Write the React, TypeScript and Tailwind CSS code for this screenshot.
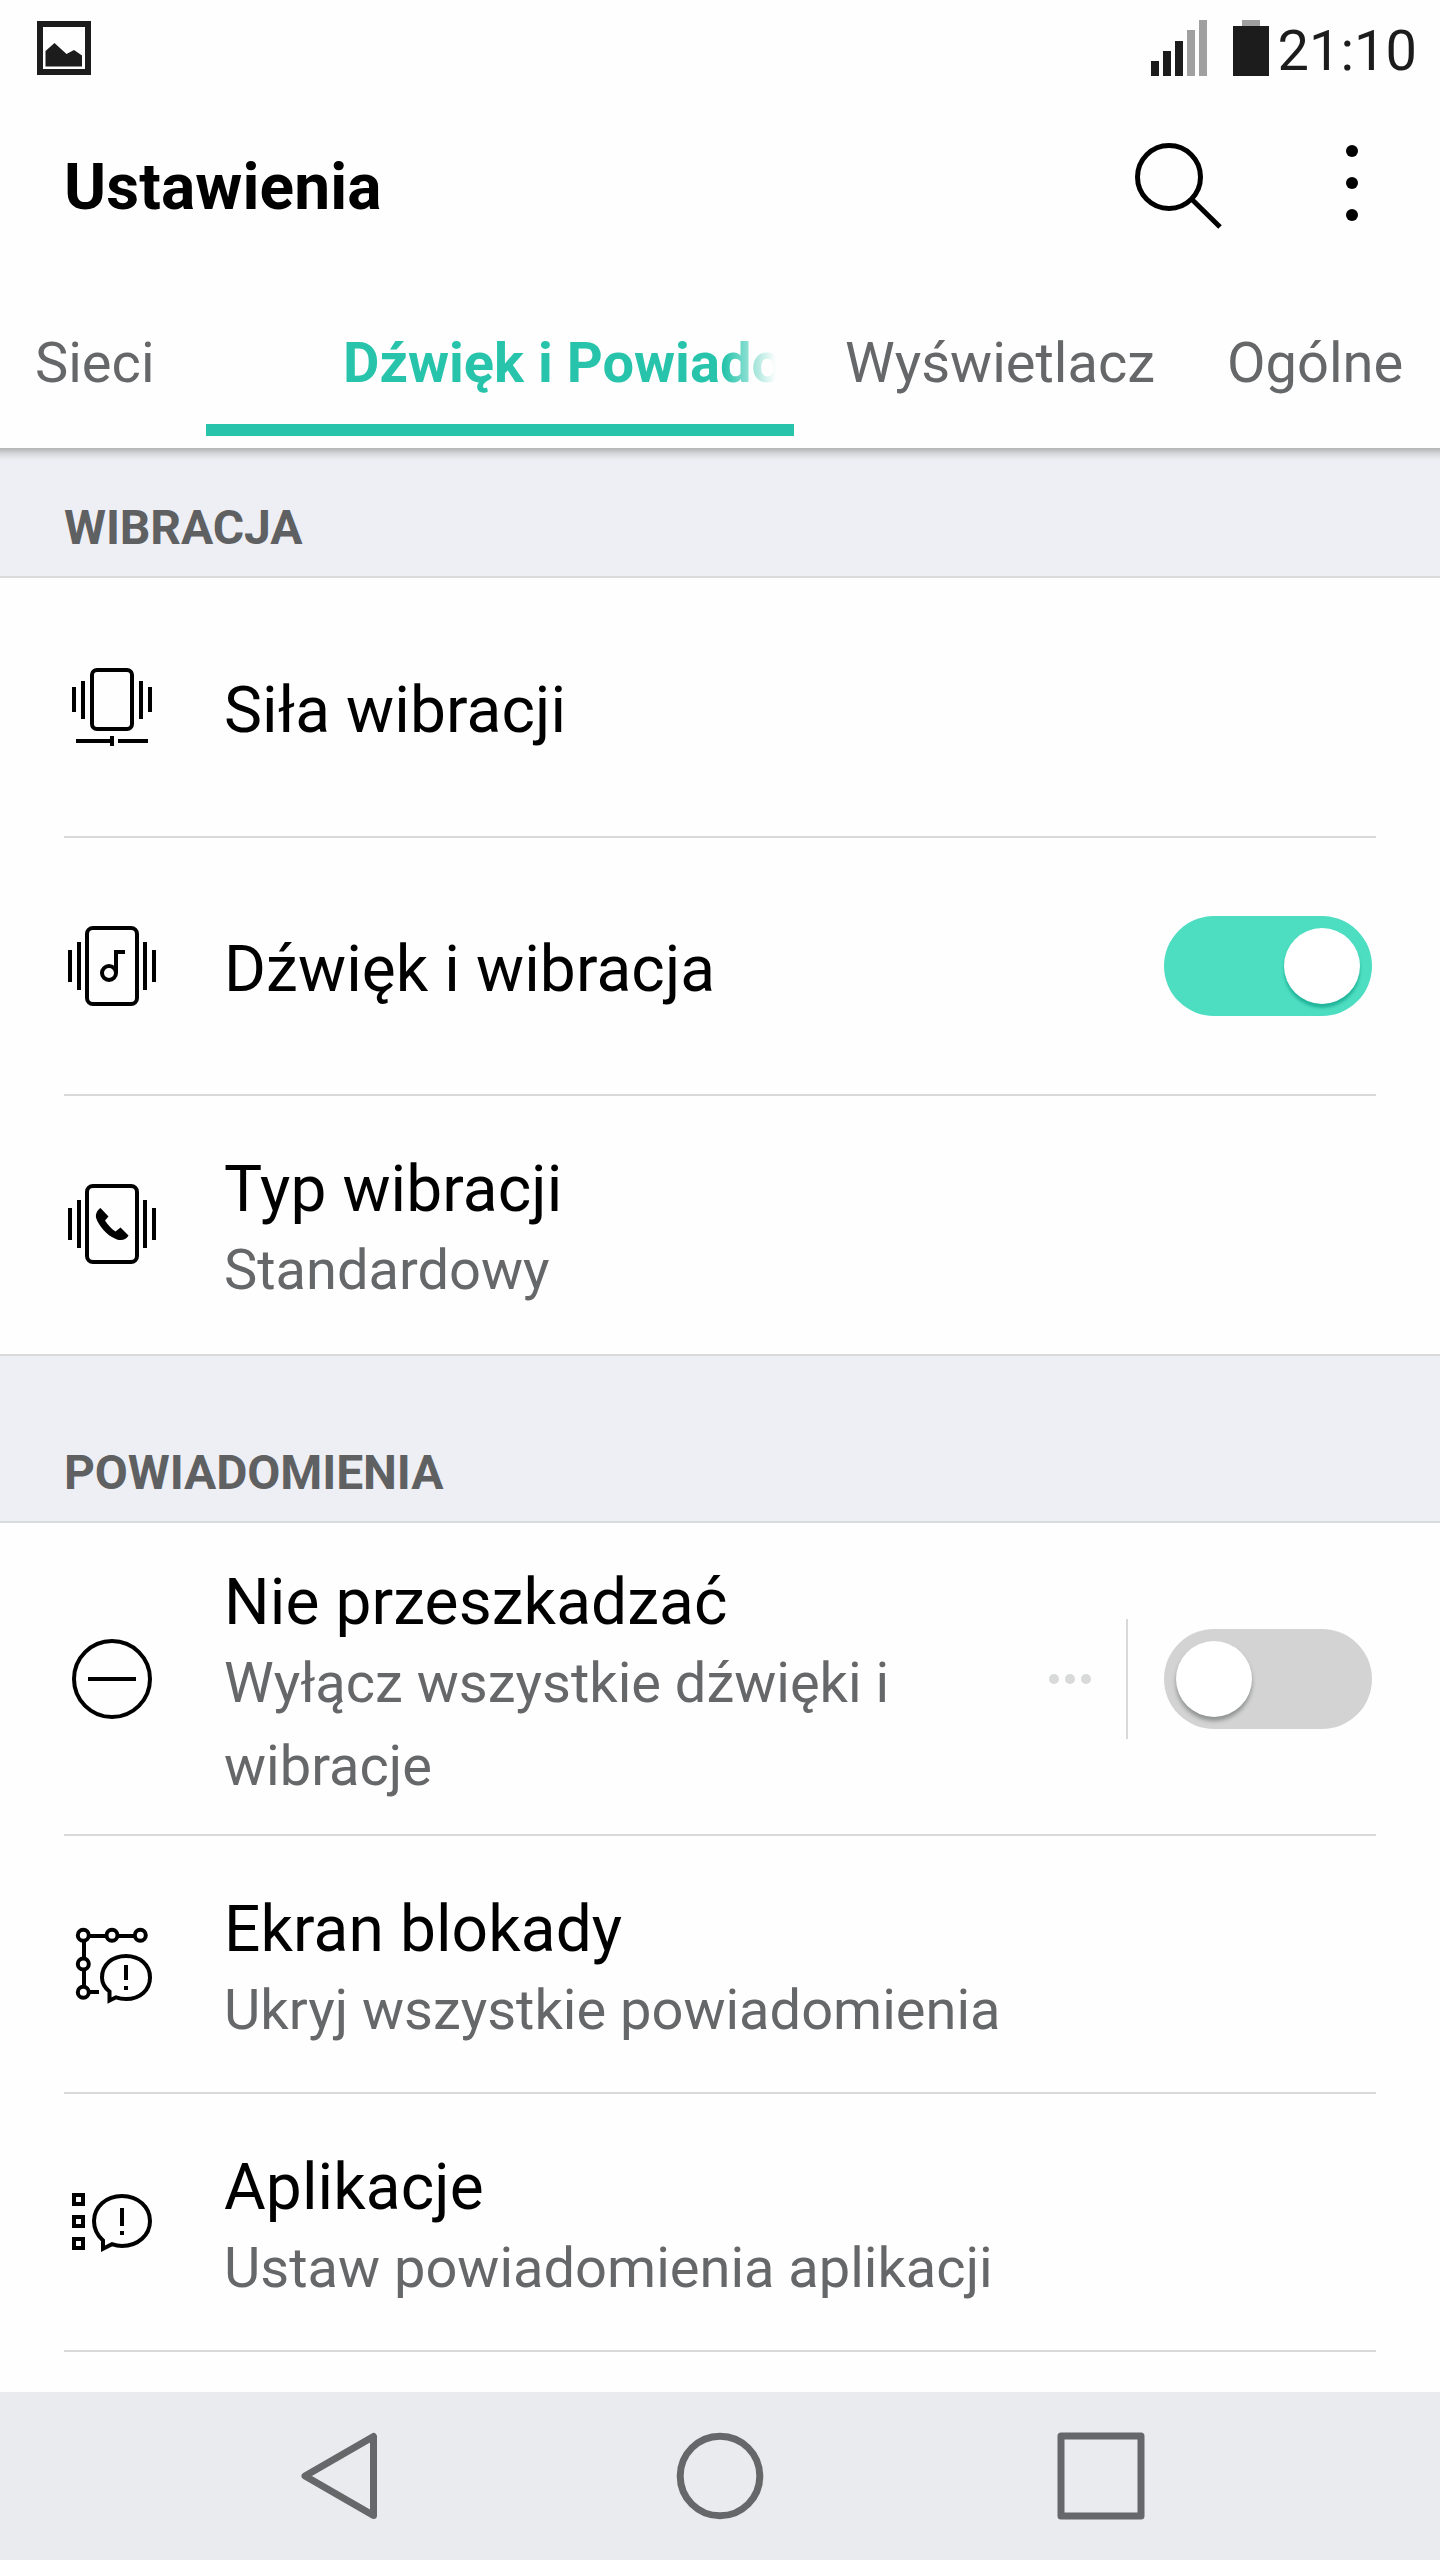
import React from 'react';
import clsx from 'clsx';

interface SettingRowProps {
    icon: React.ReactNode;
    title: string;
    summary?: string;
    className?: string;
    last?: boolean;
    children?: React.ReactNode;
}

const PictureIcon = () => (
    <svg className="w-[54px] h-[54px]" viewBox="0 0 54 54" fill="#1c1c1c">
        <path fillRule="evenodd" d="M0 0h54v54H0zM6 6v42h42V6z" />
        <path d="M8.5 30 17.500 22 29.500 33 37 29 45 34.500V45.500H8.500z" />
    </svg>
);

const SignalIcon = () => (
    <svg className="w-14 h-14" viewBox="0 0 56 56">
        <path fill="#1c1c1c" d="M0 41h8v15H0zM12 31h8v25h-8zM24 21h8v35h-8z" />
        <path fill="#a0a0a0" d="M36 10h8v46h-8zM48 0h8v56h-8z" />
    </svg>
);

const BatteryIcon = () => (
    <svg className="w-9 h-14" viewBox="0 0 36 56">
        <path fill="#a0a0a0" d="M9 0h18v6H9z" />
        <path fill="#1c1c1c" d="M0 6h36v50H0z" />
    </svg>
);

const IconBox = ({ children }: { children: React.ReactNode }) => (
    <svg className="shrink-0 w-24 h-24" viewBox="0 0 96 96" fill="none" stroke="#000" strokeWidth="4">
        {children}
    </svg>
);

const VibrationStrengthIcon = () => (
    <IconBox>
        <rect x="28" y="11" width="40" height="59" rx="5" />
        <path d="M10 28v25M19 22v38M77 22v38M86 28v25" />
        <path d="M12 82h36M54 82h30M48 77v10" />
    </IconBox>
);

// Phone outline with the vibration bars on both sides
const VibratingPhone = () => (
    <>
        <rect x="23" y="10" width="50" height="76" rx="6" />
        <path d="M6 32v32M15 24v48M81 24v48M90 32v32" />
    </>
);

const VibrationSoundIcon = () => (
    <IconBox>
        <VibratingPhone />
        <circle cx="45" cy="55" r="7" />
        <path d="M52 55V34h9" />
    </IconBox>
);

const VibrationTypeIcon = () => (
    <IconBox>
        <VibratingPhone />
        <path
            fill="#000"
            stroke="none"
            d="M36.500 32 44.500 40.500 41 44.500C44 49 47 52.500 51.500 55.500L56.500 51.500 64.500 59.500C63 63 58.500 65 53 63.500C43 60 34 49 32 41.500C31.500 37.500 33.500 34 36.500 32z"
        />
    </IconBox>
);

const DoNotDisturbIcon = () => (
    <IconBox>
        <circle cx="48" cy="48" r="38" />
        <path d="M24 48h48" />
    </IconBox>
);

const LockScreenIcon = () => (
    <IconBox>
        <circle cx="19.300" cy="19.300" r="5.500" />
        <circle cx="48" cy="19.300" r="5.500" />
        <circle cx="76.300" cy="19.300" r="5.500" />
        <circle cx="19.300" cy="48" r="5.500" />
        <circle cx="19.300" cy="76.300" r="5.500" />
        <path d="M25 20h17M54 20h17M20 25v17M20 54v17M25 76h10" />
        <path d="M45.500 75.500C41 72 38 67 38 61.500C38 49 48 40 62 40C76 40 86 49 86 61.500C86 74 76 83 62 83C58.500 83 55 82.400 52 81.300L45.500 84.500z" />
        <path d="M62 49v15M62 70v4" />
    </IconBox>
);

const AppsIcon = () => (
    <IconBox>
        <path d="M10 21h9v9h-9zM10 43h9v9h-9zM10 65h9v9h-9z" />
        <path d="M39 66.500C34 62 30 55 30 47C30 33 42 22 58 22C74 22 86 33 86 47C86 61 74 72 58 72C54.500 72 51 71.300 48 70.200L39 74.800z" />
        <path d="M58 34v18M58 57v4" />
    </IconBox>
);

const Toggle = ({ on }: { on?: boolean }) => (
    <div
        className={clsx(
            'flex items-center shrink-0 w-52 h-[100px] px-3 mr-1 rounded-full',
            on ? 'justify-end bg-[#4dddc0]' : 'bg-[#d3d3d3]'
        )}
    >
        <div
            className={clsx(
                'size-[76px] rounded-full bg-white',
                on ? 'shadow-[0_4px_3px_#22b59b]' : 'shadow-[0_4px_4px_#8f9292]'
            )}
        />
    </div>
);

const SectionHeader = ({ label, className }: { label: string; className: string }) => (
    <div className={clsx('flex items-end shrink-0 px-16 pb-5 bg-[#eeeff4] border-b-2 border-[#d9dada]', className)}>
        <h2 className="text-[48px] leading-[56px] tracking-[-0.1px] font-bold text-[#5f6062]">{label}</h2>
    </div>
);

const SettingRow: React.FC<SettingRowProps> = ({ icon, title, summary, className = 'h-[258px]', last, children }) => (
    <div className={clsx('shrink-0', last ? 'border-b-2 border-[#d9d9d9]' : 'px-16', className)}>
        <div className={clsx('flex items-center h-full', last ? 'px-16 pb-0.5' : 'border-b-2 border-[#d9d9d9]')}>
            {icon}
            <div className={clsx('flex-1 ml-16', summary ? 'pt-[15px]' : 'pt-[8px]')}>
                <div className="text-[64px] leading-[78px] tracking-[0.1px] text-black">{title}</div>
                {summary && <div className="text-[56px] leading-[83px] text-[#666769]">{summary}</div>}
            </div>
            {children}
        </div>
    </div>
);

export default function App() {
    return (
        <div className="flex flex-col w-[1440px] h-[2560px] overflow-hidden bg-[#fefefe] font-['Roboto',sans-serif]">
            {/* Status bar */}
            <div className="flex items-start shrink-0 h-24 pt-5 pl-[37px] pr-[23px]">
                <div className="pt-px">
                    <PictureIcon />
                </div>
                <div className="flex ml-auto">
                    <SignalIcon />
                    <div className="ml-[26px]">
                        <BatteryIcon />
                    </div>
                    <span className="ml-[9px] text-[56px] leading-[62px] text-[#1c1c1c]">21:10</span>
                </div>
            </div>

            {/* App bar */}
            <div className="flex items-start shrink-0 h-[176px] pt-[46px] pl-16 pr-[82px]">
                <h1 className="flex-1 mt-[6px] text-[64px] leading-[80px] tracking-[0.1px] font-bold text-black">Ustawienia</h1>
                <button>
                    <svg className="w-[88px] h-[88px]" viewBox="0 0 88 88" fill="none" stroke="#000" strokeWidth="5">
                        <circle cx="35" cy="35" r="31.500" />
                        <path d="M57.500 57 86 85" />
                    </svg>
                </button>
                <button className="mt-[3px] ml-[124px]">
                    <svg className="w-3 h-[76px]" viewBox="0 0 12 76">
                        <circle cx="6" cy="6" r="6" />
                        <circle cx="6" cy="38" r="6" />
                        <circle cx="6" cy="70" r="6" />
                    </svg>
                </button>
            </div>

            {/* Tabs */}
            <div className="relative flex shrink-0 h-[176px] text-[56px] leading-[66px] whitespace-nowrap text-[#666769]">
                <div className="w-[206px] pt-[58px] pl-[35px]">Sieci</div>
                <div className="flex flex-col w-[588px] pt-[58px] font-bold text-[#27c4ab]">
                    <div className="w-[433px] ml-[137px] overflow-hidden [mask-image:linear-gradient(to_right,#000_88%,transparent)]">
                        Dźwięk i Powiado
                    </div>
                    <div className="h-3 mt-7 bg-[#27c4ab]" />
                </div>
                <div className="w-[382px] pt-[58px] pl-[51px]">Wyświetlacz</div>
                <div className="pt-[58px] pl-[51px]">Ogólne</div>
                <div className="absolute top-full inset-x-0 h-3 bg-gradient-to-b from-[#b2b3b4] via-[#d8d9dc] to-[#eeeff4]" />
            </div>

            <SectionHeader label="WIBRACJA" className="h-[130px]" />
            <SettingRow icon={<VibrationStrengthIcon />} title="Siła wibracji" className="h-[260px]" />
            <SettingRow icon={<VibrationSoundIcon />} title="Dźwięk i wibracja">
                <Toggle on />
            </SettingRow>
            <SettingRow icon={<VibrationTypeIcon />} title="Typ wibracji" summary="Standardowy" className="h-[260px]" last />

            <SectionHeader label="POWIADOMIENIA" className="h-[167px]" />
            <SettingRow
                icon={<DoNotDisturbIcon />}
                title="Nie przeszkadzać"
                summary="Wyłącz wszystkie dźwięki i wibracje"
                className="h-[313px]"
            >
                <div className="flex gap-1.5 ml-12 mr-[35px]">
                    <span className="size-2.5 rounded-full bg-[#d8d9d9]" />
                    <span className="size-2.5 rounded-full bg-[#d8d9d9]" />
                    <span className="size-2.5 rounded-full bg-[#d8d9d9]" />
                </div>
                <div className="w-0.5 h-[120px] mr-9 bg-[#d9d9d9]" />
                <Toggle />
            </SettingRow>
            <SettingRow icon={<LockScreenIcon />} title="Ekran blokady" summary="Ukryj wszystkie powiadomienia" />
            <SettingRow icon={<AppsIcon />} title="Aplikacje" summary="Ustaw powiadomienia aplikacji" />

            {/* Navigation bar */}
            <div className="flex items-center shrink-0 h-[168px] mt-auto pl-[295px] bg-[#e9ebee]">
                <svg className="size-[88px]" viewBox="0 0 88 88" fill="none" stroke="#666769" strokeWidth="7" strokeLinejoin="round">
                    <path d="M10 44 78.500 4.500v79z" />
                </svg>
                <svg className="size-[88px] ml-[293px]" viewBox="0 0 88 88" fill="none" stroke="#666769" strokeWidth="7">
                    <circle cx="44" cy="44" r="39.800" />
                </svg>
                <svg className="size-[88px] ml-[293px]" viewBox="0 0 88 88" fill="none" stroke="#666769" strokeWidth="7" strokeLinejoin="round">
                    <path d="M4 4h80v80H4z" />
                </svg>
            </div>
        </div>
    );
}
